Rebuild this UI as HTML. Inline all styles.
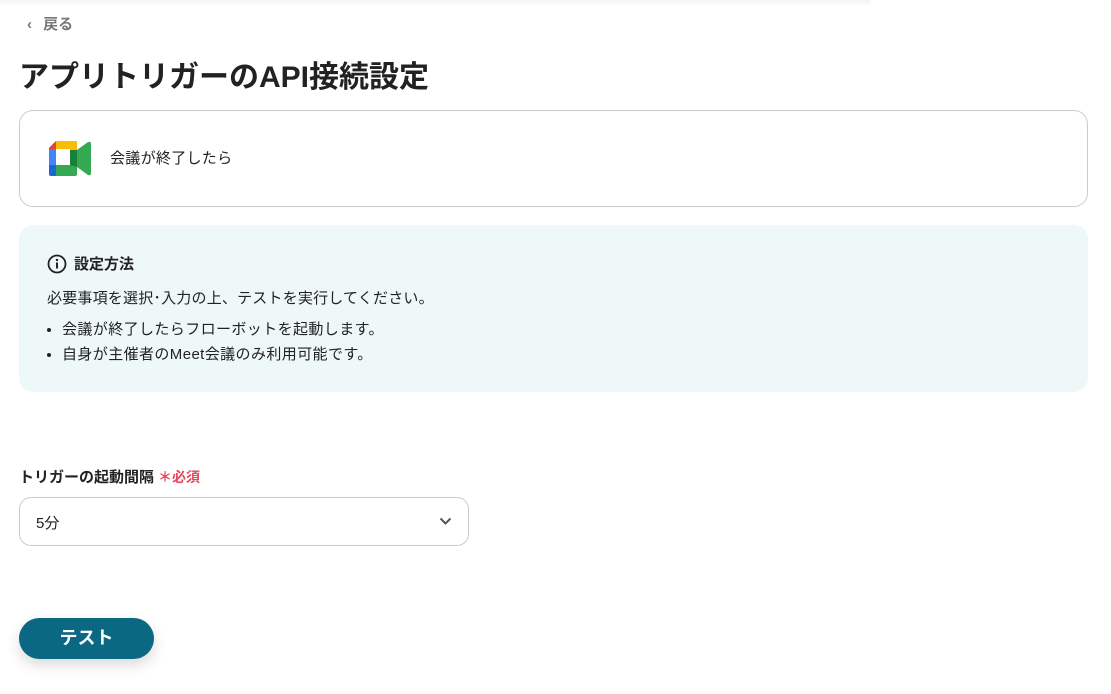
<!DOCTYPE html>
<html><head><meta charset="utf-8"><style>
*{box-sizing:border-box;margin:0;padding:0}
body{width:1111px;height:694px;background:#fff;font-family:"Liberation Sans","Noto Sans CJK JP",sans-serif;color:#222;position:relative;overflow:hidden}
.top{position:absolute;left:0;top:0;width:870px;height:6px;background:linear-gradient(#f3f3f3,#fff)}
.back{position:absolute;left:27px;top:13px;font-size:15px;color:#777;font-weight:bold}
h1{position:absolute;left:19px;top:52px;font-size:30px;font-weight:bold;color:#222;letter-spacing:0}
.card{position:absolute;left:19px;top:110px;width:1069px;height:97px;border:1px solid #ccc;border-radius:14px}
.card span{position:absolute;left:90px;top:36px;font-size:15px;letter-spacing:.3px}
.info{position:absolute;left:19px;top:225px;width:1069px;height:167px;background:#eff8f8;border-radius:14px}
.info .h{position:absolute;left:28px;top:28px;font-size:15px;font-weight:bold;display:flex;align-items:center;gap:7px}
.info p{position:absolute;left:28px;top:62px;font-size:15px;letter-spacing:.2px}
.info ul{position:absolute;left:43px;top:92px;font-size:15px;line-height:25px;letter-spacing:.4px}
.lab{position:absolute;left:19px;top:466px;font-size:15px;font-weight:bold}
.lab em{font-style:normal;color:#e5485b;font-size:14px;margin-left:4px}
.sel{position:absolute;left:19px;top:497px;width:450px;height:49px;border:1px solid #ccc;border-radius:12px;font-size:15px;padding:14px 0 0 16px}
.sel svg{position:absolute;right:16px;top:19px}
.btn{position:absolute;left:19px;top:618px;width:135px;height:41px;background:#0b6882;border-radius:21px;color:#fff;font-weight:bold;font-size:18px;text-align:center;line-height:40px;box-shadow:0 6px 14px rgba(0,0,0,.15)}
</style></head><body>
<div class="top"></div>
<div class="back"><span style="display:inline-block;width:12px">‹</span>&nbsp;戻る</div>
<h1>アプリトリガーのAPI接続設定</h1>
<div class="card">
<svg style="position:absolute;left:29px;top:30px" width="42" height="35" viewBox="0 0 42 35">
<path d="M0 7L7 0V28H0Z" fill="#4285f4"/><path d="M7 0H28V8H7Z" fill="#fbbc04"/><path d="M0 7L7 0V8H0Z" fill="#ea4335"/>
<path d="M0 24H7V35H2Q0 35 0 33Z" fill="#1967d2"/><path d="M7 24H28V33Q28 35 26 35H7Z" fill="#34a853"/>
<path d="M28 9L39 1Q42 0 42 3V32Q42 35 39 34L28 26Z" fill="#34a853"/><path d="M21 8H28V26L21 24Z" fill="#188038"/>
<path d="M21 0H26Q28 0 28 2V9H21Z" fill="#fbbc04"/>
<rect x="7" y="8" width="14" height="16" fill="#fff"/>
</svg>
<span>会議が終了したら</span></div>
<div class="info">
<div class="h"><svg width="20" height="20" viewBox="0 0 20 20"><circle cx="10" cy="10" r="8.5" fill="none" stroke="#222" stroke-width="1.8"/><rect x="9" y="8.5" width="2" height="6" fill="#222"/><circle cx="10" cy="6" r="1.2" fill="#222"/></svg>設定方法</div>
<p>必要事項を選択･入力の上、テストを実行してください。</p>
<ul><li>会議が終了したらフローボットを起動します。</li><li>自身が主催者のMeet会議のみ利用可能です。</li></ul>
</div>
<div class="lab">トリガーの起動間隔<em>＊必須</em></div>
<div class="sel">5分<svg width="13" height="9" viewBox="0 0 13 9"><path d="M1.5 1.5L6.5 6.5L11.5 1.5" fill="none" stroke="#555" stroke-width="2"/></svg></div>
<div class="btn">テスト</div>
</body></html>
